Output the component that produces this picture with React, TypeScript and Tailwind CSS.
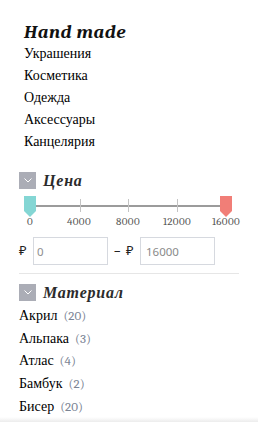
import { useState } from "react";

const categories = ["Украшения", "Косметика", "Одежда", "Аксессуары", "Канцелярия"];

const materials = [
  { name: "Акрил", count: 20 },
  { name: "Альпака", count: 3 },
  { name: "Атлас", count: 4 },
  { name: "Бамбук", count: 2 },
  { name: "Бисер", count: 20 },
];

const ticks = ["0", "4000", "8000", "12000", "16000"];

const Toggle = () => (
  <span className="flex h-[17px] w-[17px] items-center justify-center bg-[#abadb6]">
    <svg width="8" height="5" viewBox="0 0 8 5" fill="none">
      <path d="M0.5 0.5 L4 4 L7.5 0.5" stroke="#ffffff" strokeWidth="1" />
    </svg>
  </span>
);

const Handle = ({ color }: { color: string }) => (
  <svg width="12" height="21" viewBox="0 0 12 21">
    <path d="M0 0 H12 V15 L6 21 L0 15 Z" fill={color} />
  </svg>
);

const App = () => {
  const [min, setMin] = useState("0");
  const [max, setMax] = useState("16000");

  return (
    <div className="relative h-[422px] w-[258px] overflow-hidden bg-white font-serif [font-family:Liberation_Serif,serif] text-[14px] text-black">
      <div className="pl-[24px] pt-[21px]">
        <h2 className="text-[19px] font-bold italic leading-[22px] tracking-[0.5px] text-[#111]">Hand made</h2>
        <ul>
          {categories.map((c) => (
            <li key={c} className="leading-[22px]">
              {c}
            </li>
          ))}
        </ul>
      </div>

      <div className="mt-[19px] pl-[19px] pr-[19px]">
        <div className="flex h-[17px] items-center gap-[7px]">
          <Toggle />
          <span className="text-[16px] font-bold italic tracking-[0.8px] text-[#2b2b2b]">Цена</span>
        </div>

        <div className="ml-[5px] mt-[7px] w-[208px]">
          <div className="relative h-[20px]">
            <div className="absolute left-[6px] right-[6px] top-[9px] h-[2px] bg-[#9b9b9b]" />
            <div className="absolute left-[56px] top-[3px] h-[13px] w-px bg-[#c4c4c4]" />
            <div className="absolute left-[104px] top-[3px] h-[13px] w-px bg-[#c4c4c4]" />
            <div className="absolute left-[153px] top-[3px] h-[13px] w-px bg-[#c4c4c4]" />
            <div className="absolute left-0 top-0">
              <Handle color="#84d6d4" />
            </div>
            <div className="absolute right-0 top-0">
              <Handle color="#f17e77" />
            </div>
          </div>
          <div className="flex justify-between px-[6px] text-[11px] leading-[11px] tracking-[0.4px] text-[#555]">
            {ticks.map((t) => (
              <span key={t} className="flex w-0 justify-center whitespace-nowrap">
                {t}
              </span>
            ))}
          </div>
        </div>

        <div className="mt-[10px] flex items-center font-sans [font-family:Liberation_Sans,sans-serif] text-[13px]">
          <span className="w-[14px] text-[#222]">₽</span>
          <input
            value={min}
            onChange={(e) => setMin(e.target.value)}
            className="h-[28px] w-[75px] border border-[#d6d9df] px-[3px] text-[11.5px] text-[#8f8f8f] outline-none"
          />
          <span className="ml-[6px] w-[12px] text-[#222]">–</span>
          <span className="w-[14px] text-[#222]">₽</span>
          <input
            value={max}
            onChange={(e) => setMax(e.target.value)}
            className="h-[28px] w-[75px] border border-[#d6d9df] px-[5px] text-[11.5px] text-[#8a8a8a] outline-none"
          />
        </div>

        <div className="mt-[8px] h-px w-[220px] bg-[#e6e6e6]" />

        <div className="mt-[10px] flex h-[17px] items-center gap-[7px]">
          <Toggle />
          <span className="text-[16px] font-bold italic tracking-[0.8px] text-[#2b2b2b]">Материал</span>
        </div>

        <ul className="mt-[4px]">
          {materials.map((m) => (
            <li key={m.name} className="leading-[22.7px]">
              {m.name}
              <span className="ml-[6px] text-[13px] text-[#7b8494]">({m.count})</span>
            </li>
          ))}
        </ul>
      </div>

      <div className="absolute bottom-0 left-0 right-0 h-[5px] bg-gradient-to-b from-white to-[#ececec]" />
    </div>
  );
};

export default App;
